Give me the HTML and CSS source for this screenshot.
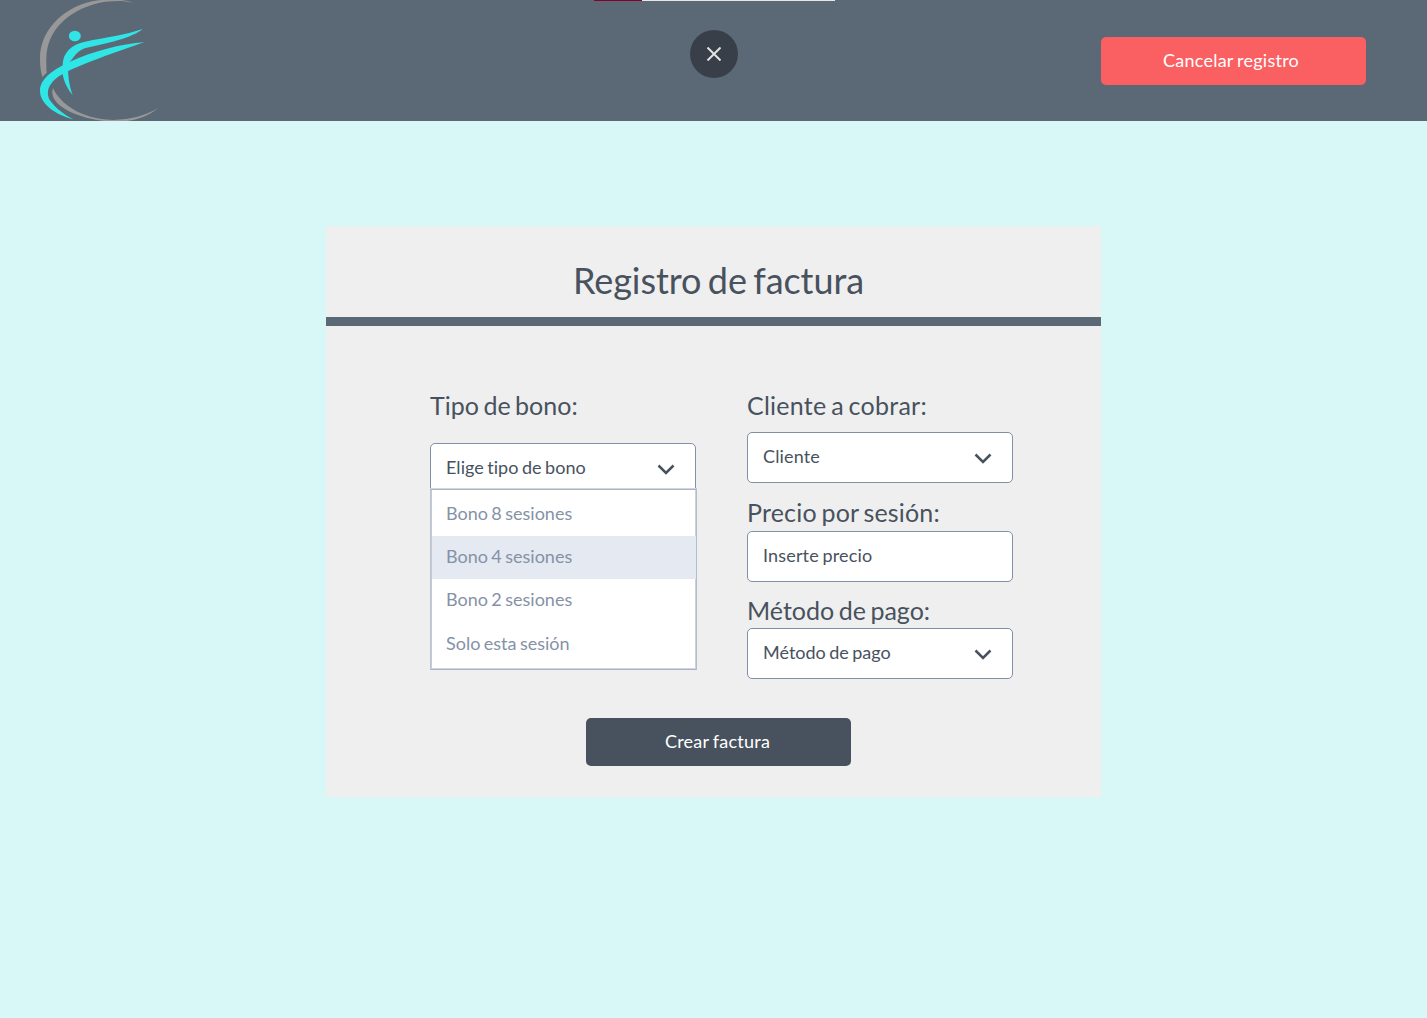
FILE: index.html
```html
<!DOCTYPE html>
<html lang="es">
<head>
<meta charset="utf-8">
<title>Registro de factura</title>
<link rel="stylesheet" href="styles.css">
</head>
<body>
<header class="topbar">
  <svg class="logo" viewBox="0 0 420 363" aria-hidden="true">
    <g fill="#999899">
      <path d="M308 8C280 1 240 2 206 9C118 30 48 90 49 180C49 195 49 207 50 218L37 231C33 217 30 200 30 180C28 85 110 14 204 1C240-4 285-2 308 8Z"/>
      <path d="M69 264C80 291 112 324 160 343C235 373 325 360 384 325C338 363 284 366 240 364C160 360 62 323 67 273Z"/>
    </g>
    <g fill="#30e5e5">
      <ellipse cx="134.500" cy="108" rx="18" ry="15.500"/>
      <path d="M98 195C98 158 125 132 165 125C230 112 285 105 338 87C305 114 235 129 164 145C132 156 129 185 106 195Z"/>
      <path d="M343 127C258 155 148 196 103 219C55 245 44 277 62 304C77 325 102 344 130 358C80 346 30 313 30 273C30 235 72 209 116 187C190 153 272 132 343 127Z"/>
      <path d="M97 216L114 208C115 238 119 261 128 285C113 267 100 243 97 216Z"/>
    </g>
  </svg>
  <div class="progress"><div class="progress-value"></div></div>
  <button class="close" aria-label="Cerrar">
    <svg viewBox="0 0 14 14"><path d="M0.500 0.500L13.500 13.500M13.500 0.500L0.500 13.500"/></svg>
  </button>
  <button class="button button-cancel">Cancelar registro</button>
</header>

<main class="card">
  <h1 class="card-title">Registro de factura</h1>
  <form class="form">
    <div class="column">
      <div class="label">Tipo de bono:</div>
      <div class="field field-open">
        <span>Elige tipo de bono</span>
        <svg class="chevron" viewBox="0 0 18 12"><path d="M1.500 1.500L9 9L16.500 1.500"/></svg>
        <ul class="menu">
          <li class="option">Bono 8 sesiones</li>
          <li class="option option-active">Bono 4 sesiones</li>
          <li class="option">Bono 2 sesiones</li>
          <li class="option">Solo esta sesión</li>
        </ul>
      </div>
    </div>
    <div class="column">
      <div class="label label-client">Cliente a cobrar:</div>
      <div class="field field-client">
        <span>Cliente</span>
        <svg class="chevron" viewBox="0 0 18 12"><path d="M1.500 1.500L9 9L16.500 1.500"/></svg>
      </div>
      <div class="label label-price">Precio por sesión:</div>
      <div class="field field-price"><span>Inserte precio</span></div>
      <div class="label">Método de pago:</div>
      <div class="field field-method">
        <span>Método de pago</span>
        <svg class="chevron" viewBox="0 0 18 12"><path d="M1.500 1.500L9 9L16.500 1.500"/></svg>
      </div>
    </div>
  </form>
  <button class="button button-create">Crear factura</button>
</main>
</body>
</html>
```
FILE: styles.css
```css
* {
  box-sizing: border-box;
}

body {
  margin: 0;
  min-height: 1018px;
  background: #d8f8f7;
  color: #48525e;
  font-family: Lato, sans-serif;
  font-size: 18px;
  font-variant-ligatures: none;
}

button {
  border: 0;
  padding: 0;
  font: inherit;
}

.topbar {
  position: relative;
  display: flex;
  align-items: center;
  justify-content: space-between;
  height: 121px;
  padding: 0 61px 0 30px;
  background: #5b6977;
}

.logo {
  width: 140px;
  height: 121px;
}

.progress {
  position: absolute;
  top: 0;
  left: 594px;
  width: 241px;
  height: 1px;
  background: #e6e6e6;
}

.progress-value {
  width: 20%;
  height: 1px;
  background: #86002b;
}

.close {
  position: absolute;
  top: 30px;
  left: 690px;
  display: flex;
  align-items: center;
  justify-content: center;
  width: 48px;
  height: 48px;
  border-radius: 50%;
  background: #393f49;
}

.close svg {
  width: 14px;
  height: 14px;
  fill: none;
  stroke: #e1e2e4;
  stroke-width: 2;
}

.button {
  width: 265px;
  height: 48px;
  padding-bottom: 1px;
  border-radius: 5px;
  color: #fff;
  font-variant-ligatures: none;
  letter-spacing: 0.25px;
  word-spacing: -1.1px;
}

.button-cancel {
  padding-right: 5px;
  background: #fa5f62;
}

.card {
  display: flex;
  flex-direction: column;
  width: 775px;
  height: 571px;
  margin: 105px 0 0 326px;
  background: #efefef;
}

.card-title {
  height: 100px;
  margin: 0;
  padding: 33px 0 0 10px;
  border-bottom: 9px solid #5b6977;
  font-size: 36px;
  font-weight: 400;
  line-height: 43px;
  text-align: center;
  letter-spacing: -0.06px;
  word-spacing: -2.8px;
}

.form {
  display: grid;
  grid-template-columns: 266px 266px;
  column-gap: 51px;
  padding: 64px 0 0 104px;
}

.label {
  font-size: 25px;
  line-height: 30px;
  word-spacing: -1.9px;
}

.label-client {
  letter-spacing: 0.25px;
}

.label-price {
  letter-spacing: 0.18px;
}

.field {
  position: relative;
  display: flex;
  align-items: center;
  justify-content: space-between;
  height: 51px;
  padding: 0 20px 4px 15px;
  border: 1px solid #8190a5;
  border-radius: 5px;
  background: #fff;
  word-spacing: -1.2px;
}

.field-open {
  margin-top: 23px;
  letter-spacing: 0.04px;
}

.field-client {
  margin: 12px 0 14px;
  letter-spacing: 0.15px;
}

.field-price {
  margin: 4px 0 13px;
  letter-spacing: 0.16px;
}

.field-method {
  margin-top: 3px;
}

.chevron {
  width: 18px;
  height: 12px;
  margin-top: 7px;
  fill: none;
  stroke: #48525e;
  stroke-width: 2.5;
}

.menu {
  position: absolute;
  top: 44px;
  left: -1px;
  width: 267px;
  height: 182px;
  margin: 0;
  padding: 3px 0 0 1px;
  border: 1px solid;
  border-color: #d0d6df #b4bdcb #a9b3c3 #bcc4d1;
  background: #fff;
  box-shadow: inset 0 1px #aab4c4, inset 0 -1px #d0d6df, inset 1px 0 #c4cbd7, inset -1px 0 #cdd3dd;
  letter-spacing: 0;
  list-style: none;
}

.option {
  height: 43.500px;
  padding: 10px 0 0 14px;
  color: #8592a6;
  line-height: 22px;
}

.option-active {
  background: #e4e9f2;
}

.option-active,
.option-active ~ .option {
  padding-top: 9px;
}

.button-create {
  margin: 39px 0 0 260px;
  padding: 0 2px 2px 0;
  background: #48525e;
}
```
